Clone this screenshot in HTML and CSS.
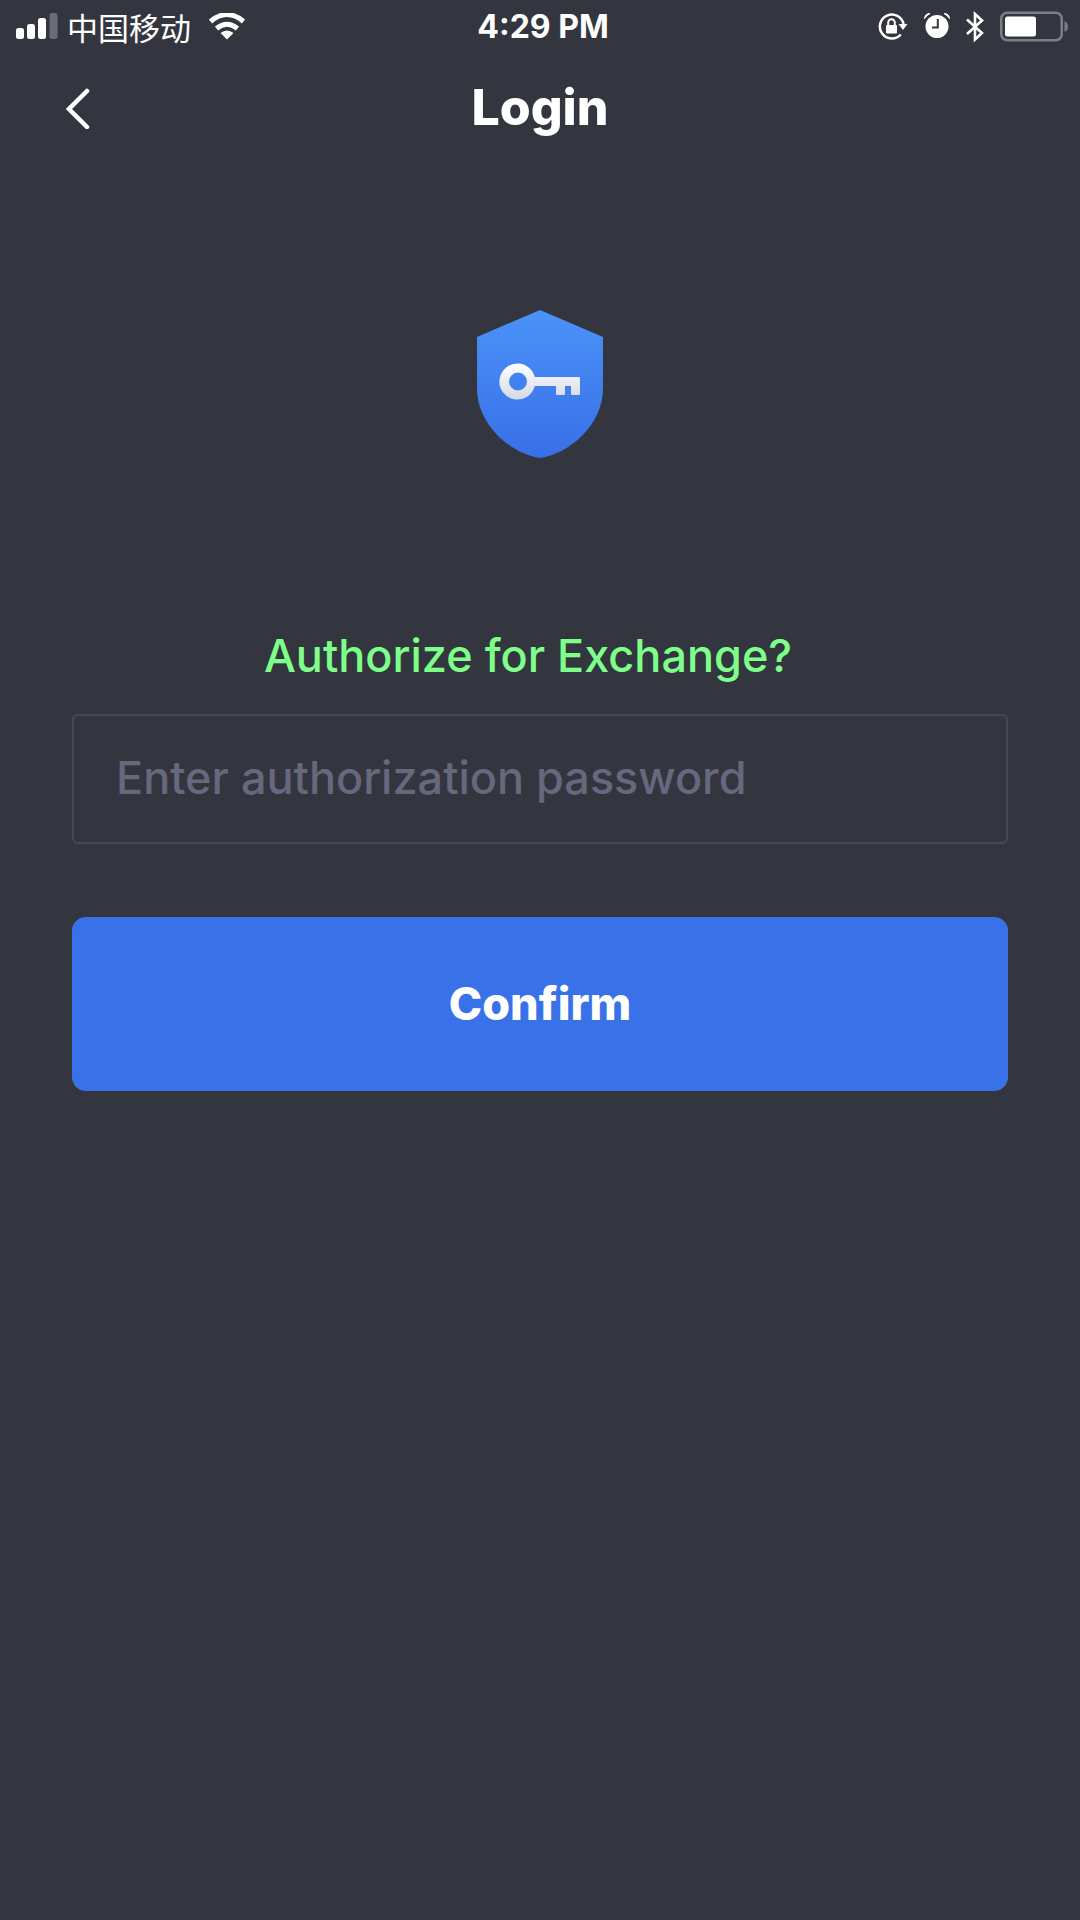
FILE: index.html
```html
<!DOCTYPE html>
<html lang="en">
<head>
<meta charset="utf-8">
<meta name="viewport" content="width=device-width, initial-scale=1">
<title>Login</title>
<link rel="stylesheet" href="styles.css">
</head>
<body>
<div class="status-bar">
  <div class="status-left">
    <svg class="signal" width="42" height="28" viewBox="0 0 42 28" fill="#fff" aria-hidden="true">
      <rect x="0" y="15" width="8" height="11" rx="2.5"/>
      <rect x="11" y="11" width="8" height="15" rx="2.5"/>
      <rect x="22" y="5" width="8" height="21" rx="2.5"/>
      <rect x="33.500" y="0" width="8" height="26" rx="2.500" fill="#6b6d76"/>
    </svg>
    <span class="carrier" lang="zh">中国移动</span>
    <svg class="wifi" width="38" height="28" viewBox="0 0 38 28" aria-hidden="true">
      <path d="M2.500 8.500Q19-5.500 35.500 8.500M8.500 15.500Q19 7 29.500 15.500" fill="none" stroke="#fff" stroke-width="5"/>
      <path d="M12.500 20Q19 15 25.500 20L19 26.500z" fill="#fff"/>
    </svg>
  </div>
  <time class="clock">4:29 PM</time>
  <div class="status-right">
    <svg width="30" height="30" viewBox="0 0 30 30" aria-hidden="true">
      <path d="M25.600 12A12 12 0 1 0 22.800 22.500" fill="none" stroke="#fff" stroke-width="2.500"/>
      <path d="M20.500 12H29.500L25 18z" fill="#fff"/>
      <rect x="8" y="13" width="11" height="8.500" rx="1" fill="#fff"/>
      <path d="M10.200 13.500V10.500a3.300 3.300 0 0 1 6.600 0V13.500" fill="none" stroke="#fff" stroke-width="2"/>
    </svg>
    <svg width="26" height="30" viewBox="0 0 26 30" aria-hidden="true">
      <circle cx="13" cy="14.500" r="11.500" fill="#fff"/>
      <path d="M0.500 6.500Q1 1.500 6 1.500Q3 3 0.500 6.500zM25.500 6.500Q25 1.500 20 1.500Q23 3 25.500 6.500z" fill="#fff" stroke="#fff" stroke-width="1"/>
      <path d="M13.800 7V15.500H8" fill="none" stroke="#34363f" stroke-width="2"/>
    </svg>
    <svg width="18" height="32" viewBox="0 0 18 32" aria-hidden="true">
      <path d="M1 8.500L16 22L9 28.500V3L16 9.500L1 23" fill="none" stroke="#fff" stroke-width="2.600"/>
    </svg>
    <svg width="70" height="32" viewBox="0 0 70 32" aria-hidden="true">
      <rect x="1.250" y="1.750" width="60.500" height="27.500" rx="6" fill="none" stroke="#7b7d87" stroke-width="2.500"/>
      <rect x="5" y="5.500" width="31" height="20" rx="2.500" fill="#fff"/>
      <path d="M64.500 10Q68 11.500 68 15.500T64.500 21z" fill="#7b7d87"/>
    </svg>
  </div>
</div>

<header class="nav-bar">
  <button class="back" type="button" aria-label="Back">
    <svg width="24" height="42" viewBox="0 0 24 42" aria-hidden="true">
      <path d="M21 4L3 22L21 40" fill="none" stroke="#fff" stroke-width="4.500" stroke-linecap="round"/>
    </svg>
  </button>
  <h1 class="title">Login</h1>
</header>

<main class="content">
  <svg class="shield" width="128" height="148" viewBox="0 0 128 148" aria-hidden="true">
    <defs>
      <linearGradient id="shield-fill" x1="0" y1="0" x2="0" y2="1">
        <stop offset="0" stop-color="#4b92f8"/>
        <stop offset="1" stop-color="#386fe7"/>
      </linearGradient>
      <linearGradient id="key-fill" x1="0" y1="0" x2="0" y2="1">
        <stop offset="0" stop-color="#fff"/>
        <stop offset="1" stop-color="#d6d8e6"/>
      </linearGradient>
    </defs>
    <path d="M64 0L127 27V78C127 116 92 144 64 148C36 144 1 116 1 78V27z" fill="url(#shield-fill)"/>
    <path fill="url(#key-fill)" fill-rule="evenodd" d="M42 53.500A18 18 0 0 1 58.800 67H103a1 1 0 0 1 1 1V84a1 1 0 0 1-1 1H96a1 1 0 0 1-1-1V76H89V84a1 1 0 0 1-1 1H81a1 1 0 0 1-1-1V76H58.800A18 18 0 1 1 42 53.500zM42 62.500a9 9 0 1 0 0 18a9 9 0 0 0 0-18z"/>
  </svg>
  <form class="form">
    <label class="prompt" for="password">Authorize for Exchange?</label>
    <input class="field" id="password" type="password" placeholder="Enter authorization password">
    <button class="confirm" type="submit">Confirm</button>
  </form>
</main>
</body>
</html>
```
FILE: styles.css
```css
* {
  box-sizing: border-box;
}

body {
  margin: 0;
  min-height: 100vh;
  background: #34363f;
  color: #fff;
  font-family: Inter, "Noto Sans CJK SC", sans-serif;
}

svg {
  display: block;
  flex: none;
}

.status-bar {
  display: grid;
  grid-template-columns: 1fr auto 1fr;
  align-items: center;
  height: 54px;
  padding: 0 10px 0 16px;
}

.status-left,
.status-right {
  display: flex;
  align-items: center;
}

.carrier {
  margin: 0 17px 0 9px;
  font-family: "Noto Sans CJK SC", sans-serif;
  font-size: 31px;
  line-height: 52px;
}

.clock {
  font-size: 32px;
  font-weight: 700;
  line-height: 54px;
}

.status-right {
  justify-content: flex-end;
  gap: 16px;
}

.nav-bar {
  display: grid;
  grid-template-columns: 1fr auto 1fr;
  align-items: center;
  height: 106px;
  padding: 0 66px;
}

.back {
  justify-self: start;
  padding: 2px 0 0;
  border: 0;
  background: none;
}

.title {
  margin: 0;
  font-size: 50px;
  font-weight: 800;
  line-height: 60px;
}

.content {
  display: flex;
  flex-direction: column;
  align-items: center;
  gap: 168px;
  padding: 150px 72px 0;
}

.form {
  display: flex;
  flex-direction: column;
  width: 100%;
}

.prompt {
  margin-bottom: 28px;
  padding-right: 24px;
  color: #7dff89;
  font-size: 45px;
  font-weight: 500;
  line-height: 60px;
  text-align: center;
}

.field {
  height: 130px;
  margin-bottom: 73px;
  padding: 0 40px 4px 42px;
  border: 2px solid #464856;
  border-radius: 6px;
  background: transparent;
  color: #fff;
  font: 500 45px Inter, sans-serif;
}

.field::placeholder {
  color: #67677d;
  opacity: 1;
}

.confirm {
  height: 174px;
  padding: 0 0 2px;
  border: 0;
  border-radius: 14px;
  background: #3972e8;
  color: #fff;
  font: 800 45px Inter, sans-serif;
}
```
